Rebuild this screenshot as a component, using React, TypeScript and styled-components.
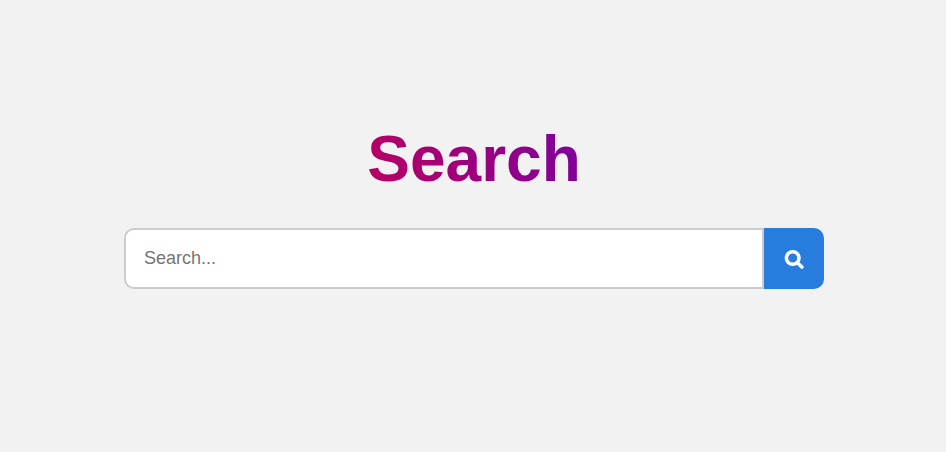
import React from "react";
import styled, { createGlobalStyle } from "styled-components";

const GlobalStyle = createGlobalStyle`
  * { box-sizing: border-box; }
  body {
    margin: 0;
    background: #f2f2f2;
    font-family: "Liberation Sans", Arial, sans-serif;
  }
`;

const Page = styled.main`
  min-height: 452px;
  padding-top: 122px;
  padding-left: 2px;
  display: flex;
  flex-direction: column;
  align-items: center;
`;

const Title = styled.h1`
  margin: 0 0 32px;
  font-size: 64px;
  line-height: 74px;
  font-weight: 700;
  color: transparent;
  background: linear-gradient(70deg, #b80060, #7d009f);
  background-clip: text;
  -webkit-background-clip: text;
`;

const SearchForm = styled.form`
  display: flex;
  width: 700px;
  height: 61px;
`;

const SearchInput = styled.input`
  width: 640px;
  padding: 0 18px;
  border: 2px solid #ccc;
  border-radius: 10px 0 0 10px;
  outline: none;
  background: #fff;
  font-family: inherit;
  font-size: 18px;
  &::placeholder { color: #757575; }
`;

const SearchButton = styled.button`
  display: flex;
  align-items: center;
  justify-content: center;
  width: 60px;
  padding: 0;
  border: 0;
  border-radius: 0 10px 10px 0;
  background: #267ddd;
  color: #fff;
`;

const SearchIcon = styled.svg`
  width: 20px;
  height: 21px;
  fill: none;
  stroke: currentColor;
  stroke-width: 3.5;
  stroke-linecap: round;
`;

export default function App() {
  return (
    <>
      <GlobalStyle />
      <Page>
        <Title>Search</Title>
        <SearchForm>
          <SearchInput type="text" placeholder="Search..." />
          <SearchButton type="button" aria-label="Search">
            <SearchIcon viewBox="0 0 20 21">
              <circle cx="8.7" cy="10" r="6.3" />
              <path d="M13.4 14.7l4.5 4.4" />
            </SearchIcon>
          </SearchButton>
        </SearchForm>
      </Page>
    </>
  );
}
